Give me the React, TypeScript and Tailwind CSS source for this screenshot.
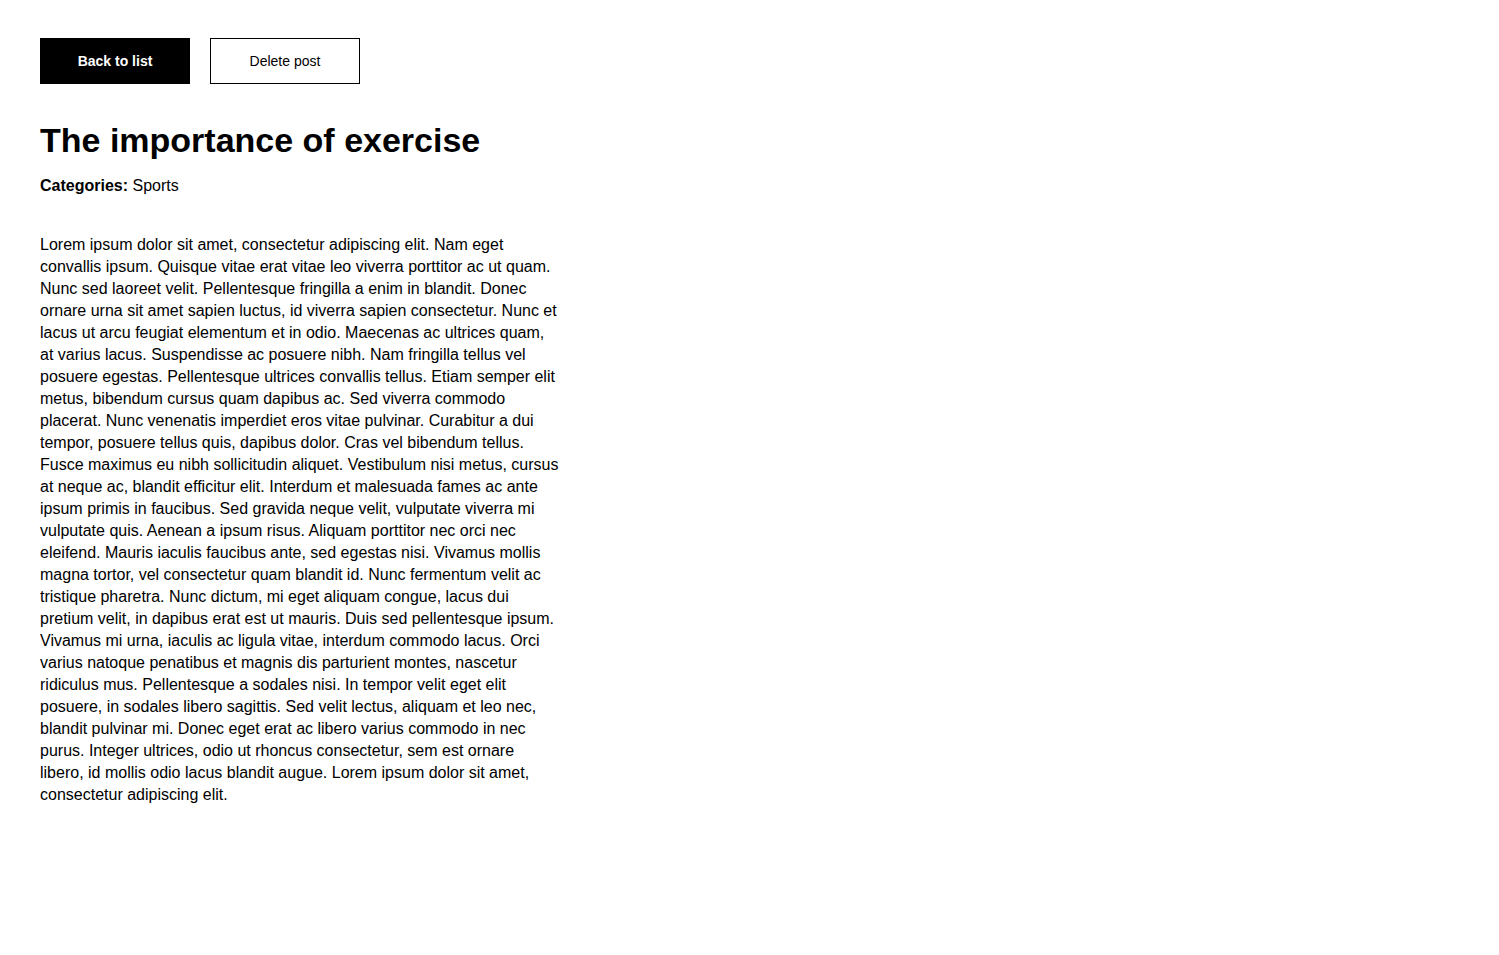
const body =
  'Lorem ipsum dolor sit amet, consectetur adipiscing elit. Nam eget convallis ipsum. Quisque vitae erat vitae leo viverra porttitor ac ut quam. Nunc sed laoreet velit. Pellentesque fringilla a enim in blandit. Donec ornare urna sit amet sapien luctus, id viverra sapien consectetur. Nunc et lacus ut arcu feugiat elementum et in odio. Maecenas ac ultrices quam, at varius lacus. Suspendisse ac posuere nibh. Nam fringilla tellus vel posuere egestas. Pellentesque ultrices convallis tellus. Etiam semper elit metus, bibendum cursus quam dapibus ac. Sed viverra commodo placerat. Nunc venenatis imperdiet eros vitae pulvinar. Curabitur a dui tempor, posuere tellus quis, dapibus dolor. Cras vel bibendum tellus. Fusce maximus eu nibh sollicitudin aliquet. Vestibulum nisi metus, cursus at neque ac, blandit efficitur elit. Interdum et malesuada fames ac ante ipsum primis in faucibus. Sed gravida neque velit, vulputate viverra mi vulputate quis. Aenean a ipsum risus. Aliquam porttitor nec orci nec eleifend. Mauris iaculis faucibus ante, sed egestas nisi. Vivamus mollis magna tortor, vel consectetur quam blandit id. Nunc fermentum velit ac tristique pharetra. Nunc dictum, mi eget aliquam congue, lacus dui pretium velit, in dapibus erat est ut mauris. Duis sed pellentesque ipsum. Vivamus mi urna, iaculis ac ligula vitae, interdum commodo lacus. Orci varius natoque penatibus et magnis dis parturient montes, nascetur ridiculus mus. Pellentesque a sodales nisi. In tempor velit eget elit posuere, in sodales libero sagittis. Sed velit lectus, aliquam et leo nec, blandit pulvinar mi. Donec eget erat ac libero varius commodo in nec purus. Integer ultrices, odio ut rhoncus consectetur, sem est ornare libero, id mollis odio lacus blandit augue. Lorem ipsum dolor sit amet, consectetur adipiscing elit.';

const App = () => {
  return (
    <div className="min-h-screen bg-white px-10 pt-[38px] text-black font-['Liberation_Sans',Arial,sans-serif]">
      <div className="flex gap-5">
        <button className="w-[150px] h-[46px] bg-black text-white text-sm font-bold">Back to list</button>
        <button className="w-[150px] h-[46px] bg-white border border-black text-sm">Delete post</button>
      </div>

      <h1 className="mt-[37px] text-[34px] leading-[38px] font-bold">The importance of exercise</h1>
      <p className="mt-4 text-base leading-[22px]">
        <strong>Categories:</strong> Sports
      </p>

      <p className="mt-[37px] w-[522px] text-base leading-[22px]">{body}</p>
    </div>
  );
};

export default App;
